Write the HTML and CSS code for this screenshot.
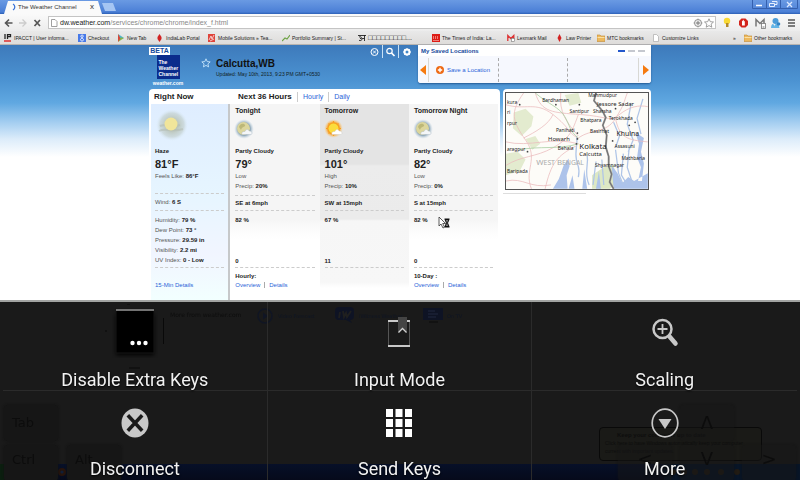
FILE: index.html
```html
<!DOCTYPE html>
<html lang="en">
<head>
<meta charset="utf-8">
<title>Remote desktop</title>
<link rel="stylesheet" href="styles.css">
</head>
<body>
<header class="chrome">
  <div class="tabstrip">
    <div class="tab">
      <svg class="ic" viewBox="0 0 8 8"><path d="M3 1a3.4 3.4 0 0 1 0 6" fill="none" stroke="#3c74d8" stroke-width="1.3"/></svg>
      <span class="tab-title">The Weather Channel</span><span class="tab-x">x</span>
    </div>
    <div class="newtab"></div>
    <div class="winbtns">
      <svg viewBox="0 0 46 10"><path d="M.5 0v8.5h45V0M14.500 0v8.500M28.500 0v8.500" fill="none" stroke="#3560ae"/><path d="M4 5.500h6" stroke="#fff" stroke-width="1.500"/><path d="M20 1.500h5v3h-2M17.500 3.500h5v3h-5z" fill="none" stroke="#e5efff"/><path d="M35 2l5 5M40 2l-5 5" stroke="#dce8ff" stroke-width="1.300"/></svg>
    </div>
  </div>
  <div class="toolbar">
    <svg class="nav" viewBox="0 0 42 14"><path d="M8.500 7H2M5 3.500L1.500 7 5 10.500" fill="none" stroke="#555" stroke-width="1.600"/><path d="M15 7h6.500M18.500 3.500L22 7l-3.500 3.500" fill="none" stroke="#ccc" stroke-width="1.300"/><path d="M30.500 4l5.500 6M36 4l-5.500 6" stroke="#555" stroke-width="1.700"/></svg>
    <div class="omnibox">
      <svg class="ic" viewBox="0 0 8 8"><path d="M1.500.5h3.500l2 2v5h-5.500z" fill="#fff" stroke="#888" stroke-width=".8"/></svg>
      <span class="url"><b>dw.weather.com</b>/services/chrome/chrome/index_f.html</span>
      <svg class="stars" viewBox="0 0 22 10"><circle cx="5" cy="5" r="3.500" fill="none" stroke="#888"/><circle cx="5" cy="5" r="1.800" fill="#888"/><path d="M5 0v10M0 5h10" stroke="#aaa" stroke-width=".5"/><path d="M16 .8l1.300 2.900 3.200.3-2.400 2.100.7 3.100L16 7.600l-2.800 1.600.7-3.100L11.500 4l3.200-.3z" fill="#fff" stroke="#888" stroke-width=".8"/></svg>
    </div>
    <svg class="ext" viewBox="0 0 76 14"><circle cx="7" cy="5" r="3.200" fill="#f8d934"/><path d="M6 7h2.500v4H6z" fill="#b48a28"/><path d="M21.500 2.500h4l2.500 2.500v4l-2.500 2.500h-4L19 9V5z" fill="#d3241c"/><path d="M22 9.500V5.500c0-1 .8-1 .8 0V4.500c0-1 1-1 1 0v1c.2-.8 1-.8 1 0v4z" fill="#fff"/><path d="M36 10.500v-7l4 4 4-4v4" fill="none" stroke="#777" stroke-width="1.500"/><rect x="41.500" y="7.500" width="4" height="5" fill="#fff" stroke="#777" stroke-width=".8"/><path d="M42.500 11h2" stroke="#777"/><circle cx="55.500" cy="5" r="3" fill="#4a9bd8"/><path d="M51 12c.2-5 3-5 3.500-1.500C55 6 59 7 59.500 12z" fill="#63b4e6"/><circle cx="58.500" cy="8" r="1.800" fill="#3384c5"/><path d="M68 4h7M68 7h7M68 10h7" stroke="#555" stroke-width="1.400"/></svg>
  </div>
  <nav class="bookmarks">
    <a href="#"><svg class="ic" viewBox="0 0 8 8"><path d="M1 0v5M3.500 0v5M3.500.7h3v2h-3" fill="none" stroke="#222" stroke-width="1.300"/><path d="M0 7h7" stroke="#d22" stroke-width="1.400"/></svg>IPACCT | User informa...</a>
    <a href="#"><svg class="ic" viewBox="0 0 8 8"><rect width="8" height="8" fill="#4779e8"/><path d="M4.200 1C2.500 1 2.500 3.500 4 3.500S5.500 1 4.200 1M4 4.300C2 4.300 2 7 4 7s2-2.700 0-2.700" fill="none" stroke="#fff" stroke-width=".9"/></svg>Checkout</a>
    <a href="#"><svg class="ic" viewBox="0 0 8 8"><path d="M1 0l6 4-4 1z" fill="#4db6c8"/><path d="M1 0v8l3-3z" fill="#d74639"/><path d="M1 8l6-4-3-.5z" fill="#82b64a"/></svg>New Tab</a>
    <a href="#"><svg class="ic" viewBox="0 0 8 8"><path d="M3.500 0l2 3v2l-2 3-2-3V3z" fill="#d22222"/></svg>IndiaLab Portal</a>
    <a href="#"><svg class="ic" viewBox="0 0 8 8"><rect width="7" height="8" fill="#df443b"/><path d="M1 6l2-4 1 3 2-4M2 7l4-2" fill="none" stroke="#fff" stroke-width=".7"/></svg>Mobile Solutions » Tea...</a>
    <a href="#"><svg class="ic" viewBox="0 0 8 8"><path d="M0 7l3-3 2 1 3-4" fill="none" stroke="#6da344" stroke-width="1.100"/></svg>Portfolio Summary | St...</a>
    <a href="#"><svg class="ic" viewBox="0 0 8 8"><path d="M0 1.500h8M6.500 1v6M1 3c3-1 3 1.500 1 1.500 3 0 2 3-1 1.800M3.500 4.500h3" fill="none" stroke="#222" stroke-width=".9"/></svg><span class="boxes">□□□□□□□□□...</span></a>
    <a href="#"><svg class="ic" viewBox="0 0 8 8"><rect width="8" height="8" fill="#dd1c16"/><path d="M1.500 2v3M3.500 2v3M5.500 2v3M1 6.500h6" stroke="#f6aaa4" stroke-width=".7"/></svg>The Times of India: La...</a>
    <a href="#"><svg class="ic" viewBox="0 0 8 8"><path d="M.8 7V1.500l3 3 3-3V5" fill="none" stroke="#d33" stroke-width="1.300"/><rect x="4.500" y="4.500" width="3" height="3" fill="#fff" stroke="#777" stroke-width=".6"/></svg>Lexmark Mail</a>
    <a href="#"><svg class="ic" viewBox="0 0 8 8"><path d="M3.500 0l2 4-2 4-2-4z" fill="#d22222"/></svg>Law Printer</a>
    <a href="#"><svg class="ic" viewBox="0 0 8 8"><path d="M0 1h3l1 1h4v5.500H0z" fill="#edb95e" stroke="#c18a35" stroke-width=".6"/><path d="M.5 3h7v1h-7z" fill="#fae0a4"/></svg>MTC bookmarks</a>
    <a href="#"><svg class="ic" viewBox="0 0 8 8"><path d="M1.500.5h3l2 2v5h-5z" fill="#fff" stroke="#aaa" stroke-width=".7"/></svg>Customize Links</a>
    <a href="#">»</a>
    <a href="#"><svg class="ic" viewBox="0 0 8 8"><path d="M0 1h3l1 1h4v5.500H0z" fill="#edb95e" stroke="#c18a35" stroke-width=".6"/><path d="M.5 3h7v1h-7z" fill="#fae0a4"/></svg>Other bookmarks</a>
  </nav>
</header>

<main class="page">
  <div class="wrap">
    <div class="masthead">
      <div class="brand"><span class="beta">BETA</span><span class="logo">The<br>Weather<br>Channel</span><span class="site">weather.com</span></div>
      <svg class="fav" viewBox="0 0 10 10"><path d="M5 .8l1.200 2.800 3 .3-2.300 2 .7 3L5 7.400 2.400 8.900l.7-3L.8 3.900l3-.3z" fill="none" stroke="#c5e4fa" stroke-width=".9"/></svg>
      <div class="place"><h1>Calcutta,WB</h1><p>Updated: May 10th, 2013, 9:23 PM GMT+0530</p></div>
      <svg class="tools" viewBox="0 0 44 14"><g fill="none" stroke="#fff"><circle cx="5.500" cy="7" r="3.500"/><path d="M4 5.500l3 3M7 5.500l-3 3" stroke-width=".9"/><path d="M13.500 0v13M29.500 0v13" stroke="#c8e1f5"/><circle cx="20.500" cy="6" r="2.700" stroke-width="1.200"/><path d="M22.500 8l3 3" stroke-width="1.700"/><circle cx="38" cy="7" r="2.500" stroke-width="2"/><path d="M38 3v8M34 7h8M35.200 4.200l1.200 1.200M39.600 8.600l1.200 1.200M40.800 4.200l-1.200 1.200M36.400 8.600l-1.200 1.200" stroke-width="1"/></g><circle cx="38" cy="7" r="1.300" fill="#4489c9"/></svg>
      <section class="saved">
        <div class="saved-head"><h2>My Saved Locations</h2><span class="dots"><i class="on"></i><i></i><i></i></span></div>
        <div class="saved-row">
          <svg class="arrow" viewBox="0 0 6 12"><path d="M6 1v10L0 6z" fill="#f57a10"/></svg>
          <div class="slots"><a href="#"><svg class="ic" viewBox="0 0 8 8"><circle cx="4" cy="4" r="4" fill="#ee6a14"/><path d="M4 1.800v4.400M1.800 4h4.400" stroke="#fff" stroke-width="1.400"/></svg>Save a Location</a><span></span><span></span></div>
          <svg class="arrow" viewBox="0 0 6 12"><path d="M0 1v10l6-5z" fill="#f57a10"/></svg>
        </div>
      </section>
    </div>

    <div class="content">
      <section class="forecast">
        <div class="heads"><h2>Right Now</h2><h2>Next 36 Hours</h2><a href="#">Hourly</a><a href="#">Daily</a></div>
        <div class="cols">
          <article class="now">
            <svg class="haze" viewBox="0 0 34 32"><defs><radialGradient id="hz"><stop offset=".3" stop-color="#b9c3b6"/><stop offset=".75" stop-color="#c8d5d6" stop-opacity=".8"/><stop offset="1" stop-color="#dcecf8" stop-opacity="0"/></radialGradient></defs><circle cx="17" cy="15" r="16" fill="url(#hz)"/><path d="M4 21c7-4 12 2 24-2M5 16c8-3 13 1 20-1" fill="none" stroke="#b4bdb4" stroke-width="2" opacity=".6"/><circle cx="16" cy="14" r="6.500" fill="#f1e59a"/></svg>
            <p class="cond">Haze</p><p class="temp">81°F</p><p>Feels Like: <b>86°F</b></p>
            <p class="wind">Wind: <b>6 S</b></p>
            <div class="facts"><p>Humidity: <b>79 %</b></p><p>Dew Point: <b>73 °</b></p><p>Pressure: <b>29.59 in</b></p><p>Visibility: <b>2.2 mi</b></p><p>UV Index: <b>0 - Low</b></p></div>
            <p class="more"><a href="#">15-Min Details</a></p>
          </article>
          <article>
            <h3>Tonight</h3>
            <svg class="sky" viewBox="0 0 20 20"><defs><radialGradient id="mo"><stop offset=".6" stop-color="#7e9aae"/><stop offset="1" stop-color="#c9dcea" stop-opacity="0"/></radialGradient></defs><circle cx="10" cy="10" r="10" fill="url(#mo)"/><circle cx="9.500" cy="9.500" r="6.500" fill="#dcd69c"/><path d="M5 8c1-4 5-4 6-2s-3 1-4 5z" fill="#bdb878"/><path d="M8 15.500c-1-3 2-3 3-3 1-3 4-2 4-.5 3-.5 4 3 2 3.500z" fill="#f4f6f8" stroke="#a9b6c0" stroke-width=".4"/></svg>
            <p class="cond">Partly Cloudy</p><p class="temp">79°</p><p>Low</p><p>Precip: <b>20%</b></p>
            <p class="wind"><b>SE at 6mph</b></p><div class="extra"><b>82 %</b><b>0</b></div>
            <div class="links"><b>Hourly:</b><p><a href="#">Overview</a><a href="#">Details</a></p></div>
          </article>
          <article class="day">
            <h3>Tomorrow</h3>
            <svg class="sky" viewBox="0 0 20 20"><defs><radialGradient id="su"><stop offset=".6" stop-color="#f89a1c"/><stop offset="1" stop-color="#fbd48c" stop-opacity="0"/></radialGradient></defs><circle cx="9.500" cy="9.500" r="9.500" fill="url(#su)"/><path d="M9.500 2v15M2 9.500h15M4.500 4.500l10 10M14.500 4.500l-10 10" stroke="#f8a020" stroke-width="1.200"/><circle cx="9.500" cy="9.500" r="5" fill="#fbdc3c"/><path d="M8 15.500c-1-3 2-3 3-3 1-3 4-2 4-.5 3-.5 4 3 2 3.500z" fill="#fff" stroke="#c5c5c0" stroke-width=".4"/></svg>
            <p class="cond">Partly Cloudy</p><p class="temp">101°</p><p>High</p><p>Precip: <b>10%</b></p>
            <p class="wind"><b>SW at 15mph</b></p><div class="extra"><b>67 %</b><b>11</b></div>
          </article>
          <article>
            <h3>Tomorrow Night</h3>
            <svg class="sky" viewBox="0 0 20 20"><circle cx="10" cy="10" r="10" fill="url(#mo)"/><circle cx="9.500" cy="9.500" r="6.500" fill="#dcd69c"/><path d="M5 8c1-4 5-4 6-2s-3 1-4 5z" fill="#bdb878"/><path d="M8 15.500c-1-3 2-3 3-3 1-3 4-2 4-.5 3-.5 4 3 2 3.500z" fill="#f4f6f8" stroke="#a9b6c0" stroke-width=".4"/></svg>
            <p class="cond">Partly Cloudy</p><p class="temp">82°</p><p>Low</p><p>Precip: <b>0%</b></p>
            <p class="wind"><b>S at 15mph</b></p><div class="extra"><b>82 %</b><b>0</b>
              <svg class="cursor" viewBox="0 0 12 14"><path d="M1 1v9l2-2 2 4 1.500-.8-1.800-3.700H7.500z" fill="#fff" stroke="#333" stroke-width=".8"/><path d="M6.500 3h5M6.500 11h5M7 3.500h4L9.500 7l1.500 3.500H7L8.500 7z" fill="#777" stroke="#111"/></svg></div>
            <div class="links"><b>10-Day :</b><p><a href="#">Overview</a><a href="#">Details</a></p></div>
          </article>
        </div>
      </section>
      <aside class="side">
        <div class="mapbox">
        <svg class="map" viewBox="0 0 145 98">
          <rect width="145" height="98" fill="#fdfcf8"/>
          <path d="M8 20l12-4 8 8-2 10-10 10-9-8zM0 62l12-2 8 8-6 12-14 4zM60 2l14-2 3 10-12 3zM20 47l10-3 5 8-8 6z" fill="#e3ebcf"/>
          <path d="M88 84l12-8 10-2 4 18-8 6H88z" fill="#dde8c4"/>
          <path d="M48 98l6-10 5-14 5-7 1 8-3 9 1 14zM64 98l4-14 2 14M78 98l2-20 3 20M92 98l3-18 2 18M110 98l-2-24 6 8 5 10 6-6 6 4 14-8v16zM132 40l4 12-2 14 4 10-3 14h4l2-18-3-12 3-14z" fill="#adc3ea"/>
          <path d="M72 44c2 8-2 14 0 24s4 8 2 18M83 64c2 10-4 16 2 30M92 70l-3 24M98 68l2 26M112 58l3 24 5 12M120 62l-2 22 6 10M126 56l-2 20 6 18M110 30l6 14-4 12M128 10l-4 22 6 16-5 12M140 6l-6 20 4 16" fill="none" stroke="#afc5e7" stroke-width="1.300"/>
          <path d="M0 12c20 6 30-4 48 10s16 20 26 24M0 50c24 6 48-6 74 2M0 74c16-10 30-8 48-18s20-18 26-34M26 98c-8-20 8-30-6-50S4 20 18 0M40 98c6-26 12-34 32-44M30 0c6 20 18 20 46 22s30 8 40 0 20-10 29-8M74 46c14-10 28-4 38-20s8-16 12-26M48 22c-4 10-18 18-30 24M56 0c-2 20 6 30 18 44M112 26c4 20 12 22 33 24M0 90c18-4 24 8 46 4" fill="none" stroke="#ebbcbe" stroke-width=".8"/>
          <path d="M30 0c14 12 24 14 30 24s4 14 14 22M14 58c20-4 40 0 60-6" fill="none" stroke="#a7cda0" stroke-width=".8"/>
          <path d="M92 0l-2 8 5 6 4 5 3 6-3 8 4 10-1 12 3 10 0 10 3 8-2 8 4 7" fill="none" stroke="#999" stroke-width="2"/>
          <path d="M92 0l-2 8 5 6 4 5 3 6-3 8 4 10-1 12 3 10 0 10 3 8-2 8 4 7" fill="none" stroke="#555" stroke-width=".6"/>
          <g fill="#444"><circle cx="14" cy="12" r=".9"/><circle cx="51" cy="12" r=".9"/><circle cx="75" cy="12" r=".9"/><circle cx="73" cy="41" r=".9"/><circle cx="73" cy="47" r=".9"/><circle cx="72" cy="52" r=".9"/><circle cx="112" cy="16" r=".9"/><circle cx="126" cy="33" r=".9"/><circle cx="109" cy="49" r=".9"/><circle cx="22" cy="60" r=".9"/><circle cx="132" cy="30" r=".9"/></g>
          <g class="mt"><text x="84" y="4">Mahmudpur</text><text x="1" y="11">kura</text><text x="37" y="9">Bardhaman</text><text x="93" y="13" class="m6">Jessore Sadar</text><text x="65" y="20">Santipur</text><text x="89" y="20">Sharsha</text><text x="1" y="21">ri</text><text x="1" y="33">rpur</text><text x="76" y="30">Bhatpara</text><text x="105" y="28">Terokhada</text><text x="51" y="40">Panihati</text><text x="86" y="41">Basirhat</text><text x="113" y="44" class="m7">Khulna</text><text x="43" y="49" class="m6">Howarh</text><text x="1" y="59">aragpur</text><text x="53" y="58">Behala</text><text x="75" y="57" class="m8">Kolkata</text><text x="75" y="64" class="m6">Calcutta</text><text x="111" y="56">Assasuni</text><text x="118" y="69">Mathbaria</text><text x="91" y="76">Shyamnagar</text><text x="1" y="82">Baripada</text><text x="31" y="74" class="wb">W<tspan class="sc">EST</tspan> B<tspan class="sc">ENGAL</tspan></text></g>
        </svg>
        </div>
        <div class="below"></div>
      </aside>
    </div>
  </div>
</main>

<nav class="menu">
  <div class="under" aria-hidden="true">
    <span class="u wx">More from weather.com</span>
    <svg class="u play" viewBox="0 0 18 18"><circle cx="9" cy="9" r="7" fill="none" stroke="#0e1528" stroke-width="1.500"/><path d="M7 5.500l5 3.500-5 3.500z" fill="#0e1528"/></svg>
    <span class="u vf">Video Forecast</span>
    <svg class="u iw" viewBox="0 0 20 16"><path d="M4 0h11a4 4 0 0 1 4 4v5a4 4 0 0 1-4 4l2 3-6-3H4a4 4 0 0 1-4-4V4a4 4 0 0 1 4-4z" fill="#0b1228"/><path d="M5 5l-1 6M8 4l1 6 2-4 1 4 4-6" fill="none" stroke="#222" stroke-width="1.800"/></svg>
    <span class="u wit">iWitness Weather</span>
    <svg class="u tv" viewBox="0 0 22 16"><rect width="20" height="12" fill="#0b1228"/><path d="M5 3h7M5 6h10M5 9h8" stroke="#1c2540" stroke-width="1.500"/><path d="M6 14h9" stroke="#101010" stroke-width="2"/></svg>
    <span class="u on">On TV</span>
    <svg class="u frame" viewBox="0 0 64 70"><path d="M59.500 14v26M25 64h11M23 0h3M1 27h2" stroke="#040404"/></svg>
    <span class="u taskbar"></span>
    <svg class="u win" viewBox="0 0 300 16"><path d="M0 0h46l3 16H0z" fill="#07210c"/><circle cx="8" cy="8" r="3" fill="#28150b"/><circle cx="62" cy="8" r="4" fill="#2c1308"/><circle cx="62" cy="8" r="1.600" fill="#0c2045"/></svg>
    <svg class="u tray" viewBox="0 0 136 16"><path d="M0 0h136v16H0z" fill="#03142c"/><g fill="#241c12"><circle cx="9" cy="8" r="3"/><circle cx="20" cy="8" r="3"/><circle cx="31" cy="8" r="3"/><circle cx="43" cy="8" r="3"/><circle cx="57" cy="8" r="3"/><circle cx="73" cy="8" r="3"/></g></svg>
    <span class="u tip"><b>Keep your computer up to date</b><br>Click here to have Windows automatically keep your computer<br>current with important updates.</span>
    <span class="u key k-tab">Tab</span><span class="u key k-ctrl">Ctrl</span><span class="u key k-alt">Alt</span>
    <span class="u key k-up">ᐱ</span><span class="u key k-left">&lt;</span><span class="u key k-down">ᐯ</span><span class="u key k-right">&gt;</span>
  </div>
  <button type="button"><svg viewBox="0 0 48 52" class="icon big"><defs><filter id="sh"><feGaussianBlur stdDeviation="2"/></filter></defs><rect x="5" y="8" width="38" height="41" fill="#060606" filter="url(#sh)"/><rect x="5" y="3" width="38" height="44" fill="#000" stroke="#161616"/><path d="M5 4h38" stroke="#737373" stroke-width="2"/><g fill="#fff"><circle cx="21.500" cy="37" r="2.200"/><circle cx="28" cy="37" r="2.200"/><circle cx="34.500" cy="37" r="2.200"/></g></svg><span>Disable Extra Keys</span></button>
  <button type="button"><svg viewBox="0 0 40 40" class="icon"><path d="M9.500 7v25M30.500 7v25" stroke="#555"/><path d="M9 7h10M28 7h3M9 32h22" stroke="#c8c8c8" stroke-width="2"/><path d="M19 3h9v16l-4.500-4.500L19 19z" fill="#444"/><path d="M19.500 18.500l4-4 4 4" fill="none" stroke="#d0d0d0" stroke-width="1.300"/></svg><span>Input Mode</span></button>
  <button type="button"><svg viewBox="0 0 40 40" class="icon"><g fill="none" stroke="#c8c8c8"><circle cx="17.500" cy="15" r="9" stroke-width="2.500"/><path d="M17.500 10v10M12.500 15h10" stroke-width="1.800"/><path d="M24.500 22.500l6 7" stroke-width="4.500" stroke-linecap="round"/></g></svg><span>Scaling</span></button>
  <button type="button"><svg viewBox="0 0 40 40" class="icon"><ellipse cx="20" cy="20" rx="13.500" ry="14.500" fill="#c8c8c8"/><path d="M14 13.500l12 13M26 13.500l-12 13" stroke="#1a1a1a" stroke-width="3.500" stroke-linecap="square"/></svg><span>Disconnect</span></button>
  <button type="button"><svg viewBox="0 0 40 40" class="icon"><g fill="#fff"><path d="M7 6h7v8H7zM16.500 6h7v8h-7zM26 6h7v8h-7zM7 16h7v8H7zM16.500 16h7v8h-7zM26 16h7v8h-7zM7 26h7v8H7zM16.500 26h7v8h-7zM26 26h7v8h-7z"/></g></svg><span>Send Keys</span></button>
  <button type="button"><svg viewBox="0 0 40 40" class="icon"><ellipse cx="20" cy="20" rx="12.800" ry="13.800" fill="none" stroke="#c8c8c8" stroke-width="1.700"/><path d="M13.500 16h13L20 26z" fill="#c8c8c8"/></svg><span>More</span></button>
</nav>
</body>
</html>
```

FILE: styles.css
```css
* { box-sizing: border-box; }
body, h1, h2, h3, p { margin: 0; }
body {
  display: flex;
  flex-direction: column;
  min-height: 100vh;
  overflow-x: hidden;
  background: #fff;
  color: #222;
  font-family: "Liberation Sans", Arial, sans-serif;
  font-size: 6px;
  line-height: 10px;
}
a { color: #2a63d8; text-decoration: none; }
svg { display: block; flex: none; }
.ic { width: 8px; height: 8px; }

/* Browser window */
.tabstrip {
  display: flex;
  height: 14px;
  padding-left: 4px;
  background: linear-gradient(#6a9ae3, #4b7fd6 85%, #2c60b6);
}
.tab {
  display: flex;
  align-items: center;
  width: 98px;
  padding: 0 8px 0 6px;
  background: #fafafa;
  clip-path: polygon(4px 1px, 94px 1px, 100% 100%, 0 100%);
  color: #333;
  white-space: nowrap;
}
.tab-title { flex: 1; }
.tab-x { font-size: 8px; }
.newtab {
  width: 14px;
  height: 8px;
  margin-top: 3px;
  background: #a5c5f3;
  clip-path: polygon(0 0, 11px 0, 100% 100%, 3px 100%);
}
.winbtns { width: 46px; height: 10px; margin: 0 2px 0 auto; }
.toolbar {
  display: flex;
  align-items: center;
  gap: 4px;
  height: 17px;
  padding: 2px 4px;
  background: linear-gradient(#fafafa, #ececec);
}
.nav { width: 42px; height: 14px; }
.omnibox {
  display: flex;
  flex: 1;
  align-items: center;
  gap: 2px;
  height: 13px;
  margin-left: -2px;
  padding-left: 1px;
  border: 1px solid #c4c4c4;
  background: #fff;
}
.url { flex: 1; color: #888; font-size: 7px; white-space: nowrap; }
.url b { color: #222; font-weight: 400; }
.stars { width: 22px; height: 10px; }
.ext { width: 76px; height: 14px; }
.bookmarks {
  display: grid;
  grid-template-columns: 74fr 39fr 39fr 52fr 74fr 76fr 74fr 75fr 49fr 41fr 55fr 81fr 11fr 52fr;
  align-items: center;
  height: 14px;
  padding: 0 4px;
  border-bottom: 1px solid #b8b4b0;
  background: linear-gradient(#e9e9e9, #dedcda);
}
.bookmarks a {
  display: flex;
  gap: 2px;
  min-width: 0;
  align-items: center;
  color: #222;
  font-size: 5px;
  white-space: nowrap;
}
.bookmarks .boxes { font-size: 7px; }

/* Weather page */
.page {
  display: flex;
  flex: 1;
  justify-content: center;
  background: linear-gradient(#3d7abb, #4c93d2 36px, #60a8e1 58px, #a6cff1 78px, #dcecfa 94px, #fff 112px);
}
.wrap {
  display: flex;
  flex-direction: column;
  width: min(502px, 100%);
}
.masthead { display: flex; height: 44px; }
.brand { display: flex; flex-direction: column; align-items: center; width: 38px; padding-top: 2px; }
.beta {
  align-self: flex-start;
  width: 21px;
  background: #fff;
  color: #174a9c;
  font-weight: 700;
  font-size: 7px;
  line-height: 8px;
  text-align: center;
}
.logo {
  width: 23px;
  height: 24px;
  padding: 4px 0 0 2px;
  background: #0b2c8c;
  color: #fff;
  font-weight: 700;
  font-size: 5px;
  line-height: 6px;
}
.site { color: #fff; font-weight: 700; font-size: 5px; line-height: 8px; }
.fav { width: 10px; height: 10px; margin: 13px 5px 0 14px; }
.place { flex: 1; padding-top: 13px; white-space: nowrap; }
.place h1 { color: #111; font-size: 10px; line-height: 12px; }
.place p { color: #122; font-size: 5px; line-height: 9px; }
.tools { width: 44px; height: 14px; margin-right: 5px; }
.saved {
  width: 233px;
  height: 38px;
  border-radius: 0 0 3px 3px;
  background: #fff;
  box-shadow: 0 1px 2px #235a93;
}
.saved-head { display: flex; justify-content: space-between; padding: 1px 6px 0 3px; }
.saved-head h2 { color: #174a9c; font-size: 6px; line-height: 10px; }
.dots { display: flex; gap: 3px; padding-top: 4px; }
.dots i { width: 7px; height: 2px; background: #c5c8cf; }
.dots .on { background: #2458cc; }
.saved-row {
  display: flex;
  align-items: center;
  height: 27px;
  padding: 0 2px;
  border-radius: 0 0 3px 3px;
  background: #f6f8fe;
}
.arrow { width: 6px; height: 12px; }
.slots {
  display: grid;
  flex: 1;
  grid-template-columns: 1fr 1fr 1fr;
  height: 24px;
  margin: 0 4px 0 2px;
  border: solid #d8d8d4;
  border-width: 0 1px;
}
.slots > * { border-right: 1px dashed #aaa; }
.slots > :last-child { border: 0; }
.slots a { display: flex; align-items: center; gap: 3px; padding-left: 7px; white-space: nowrap; }

.content { display: flex; flex: 1; gap: 3px; }
.forecast {
  display: flex;
  flex: 350;
  flex-direction: column;
  padding: 0 2px;
  border-radius: 4px 4px 0 0;
  background: #fff;
}
.heads {
  display: flex;
  height: 15px;
  padding: 2px 3px 0;
  font-size: 7px;
  line-height: 12px;
}
.heads h2 { width: 84px; font-size: 8px; line-height: 12px; }
.heads h2 + h2 { width: 59px; }
.heads a { height: 10px; margin-top: 1px; padding: 0 5px; border-left: 1px solid #ccc; line-height: 10px; }
.cols { display: grid; flex: 1; grid-template-columns: 79fr 89fr 89fr 89fr; }
.cols article {
  padding: 0 5px;
  background: linear-gradient(#f5f5f5 115px, #fbfbfb 125px, #fff 135px);
}
.cols .now {
  padding: 0 4px;
  border-right: 2px solid #c6c8ca;
  background: linear-gradient(#dfedff, #e6f5ff 90px, #f1f5ff 150px, #f2ffff);
}
.cols .day {
  background: linear-gradient(#e4e4e4 60px, #ececec 62px, #ebebeb 115px, #f6f6f6 117px, #f7f7f7 178px, #fff 184px);
}
.cols h3 { font-size: 7px; line-height: 14px; }
.haze { width: 34px; height: 32px; margin: 6px 0 4px; }
.sky { width: 20px; height: 20px; margin: 1px 0 7px -1px; }
.cols p { color: #555; white-space: nowrap; }
.cols b, .cols .cond { color: #222; font-weight: 700; }
.cols .temp { padding-top: 1px; color: #222; font-weight: 700; font-size: 11px; line-height: 14px; }
.cols .wind {
  margin-top: 4px;
  padding: 2px 0;
  border: dashed #ccc;
  border-width: 1px 0;
}
.cols .now .wind { margin-top: 12px; padding: 3px 0; }
.facts { padding: 4px 0 2px; border-bottom: 1px dashed #ccc; }
.more { padding-top: 12px; }
.extra {
  position: relative;
  display: flex;
  flex-direction: column;
  justify-content: space-between;
  height: 57px;
  padding: 4px 0 1px;
  border-bottom: 1px dashed #ccc;
}
.cursor { position: absolute; left: 24px; top: 5px; width: 12px; height: 14px; }
.links { padding-top: 4px; line-height: 9px; }
.links a + a { margin-left: 4px; padding-left: 4px; border-left: 1px solid #aaa; }
.side { flex: 149; }
.mapbox { padding: 3px 2px 1px; border-radius: 4px 4px 0 0; background: #fff; }
.map { width: 100%; border: 1px solid #555; }
.mt { fill: #222; font-family: "Noto Sans", sans-serif; font-size: 5px; }
.m6 { font-size: 6px; }
.m7 { font-size: 7px; }
.m8 { font-size: 8px; }
.wb { fill: #aaa; font-size: 8px; }
.sc { font-size: 7px; }
.below {
  width: 83px;
  height: 3px;
  border-bottom: 1px solid #ddd;
}

/* Options menu over the remote screen */
.menu {
  position: relative;
  display: grid;
  grid-template-columns: repeat(3, 1fr);
  padding: 0 3px;
  border-top: 2px solid #a2a4a2;
  background: #1a1a1a;
}
.menu button {
  position: relative;
  display: flex;
  flex-direction: column;
  align-items: center;
  gap: 15px;
  height: 89px;
  padding: 12px 0 0;
  border: solid #2b2b2b;
  border-width: 0 1px 1px 0;
  background: none;
  color: #f2f2f2;
  font: 18px/22px Roboto, "Open Sans", sans-serif;
  text-shadow: 0 1px 2px #000;
}
.menu button:nth-of-type(3n) { border-right: 0; }
.menu button:nth-of-type(n + 4) { border-bottom: 0; }
.icon { width: 40px; height: 40px; }
.icon.big { width: 48px; height: 52px; margin: -8px 0 -4px; }
.under { position: absolute; inset: 0; overflow: hidden; opacity: .75; }
.u { position: absolute; color: #0a0a0a; white-space: nowrap; }
.wx { left: 170px; top: 8px; font: 6px/10px "DejaVu Sans", sans-serif; }
.play { left: 256px; top: 5px; width: 18px; height: 18px; }
.vf, .wit, .on { top: 9px; color: #0b1428; font: 5px/10px "DejaVu Sans", sans-serif; }
.vf { left: 278px; }
.iw { left: 335px; top: 5px; width: 20px; height: 16px; }
.wit { left: 359px; }
.tv { left: 423px; top: 6px; width: 22px; height: 16px; }
.on { left: 447px; }
.frame { left: 104px; top: 2px; width: 64px; height: 70px; }
.key {
  width: 54px;
  height: 36px;
  padding-left: 8px;
  border-radius: 4px;
  background: #161616;
  box-shadow: 0 0 3px #101010;
  color: #080808;
  font: 13px/36px "DejaVu Sans", sans-serif;
}
.k-tab { left: 4px; top: 103px; }
.k-ctrl { left: 4px; top: 143px; }
.k-alt { left: 67px; top: 143px; }
.k-up { left: 680px; top: 103px; }
.k-left { left: 618px; top: 143px; }
.k-down { left: 680px; top: 143px; }
.k-right { left: 742px; top: 143px; }
.k-up, .k-left, .k-down, .k-right {
  padding: 0;
  background: rgb(22 22 22 / .5);
  box-shadow: 0 0 3px rgb(16 16 16 / .6);
  font-size: 18px;
  text-align: center;
}
.k-ctrl, .k-alt { line-height: 30px; }
.k-left, .k-down, .k-right { line-height: 28px; }
.tip {
  left: 599px;
  top: 125px;
  width: 163px;
  height: 34px;
  padding: 3px 5px;
  border: 1px solid #050505;
  border-radius: 4px;
  background: #1b1b17;
  font-size: 5px;
  line-height: 8px;
}
.tip b { padding-left: 12px; font-size: 6px; }
.taskbar { left: 0; right: 0; bottom: 0; height: 16px; background: linear-gradient(#020e2e, #00061c); }
.win { left: 0; bottom: 0; width: 300px; height: 16px; }
.tray { right: 0; bottom: 0; width: 136px; height: 16px; }
```
